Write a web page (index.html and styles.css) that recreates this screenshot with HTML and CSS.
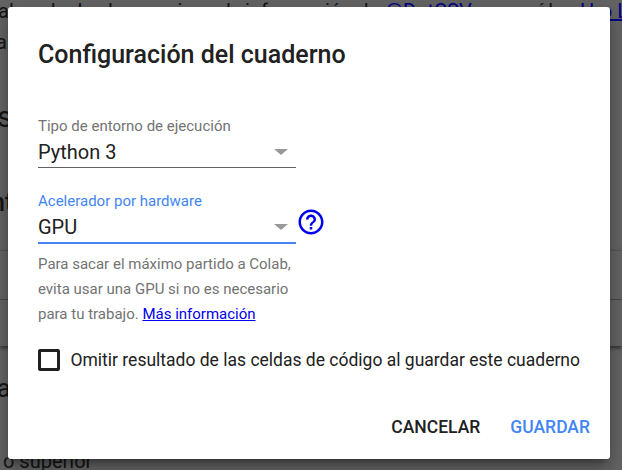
FILE: index.html
```html
<!DOCTYPE html>
<html lang="es">
<head>
<meta charset="utf-8">
<title>Configuración del cuaderno</title>
<link rel="stylesheet" href="styles.css">
</head>
<body>
<div class="page">
  <p class="copy intro"><span class="w1">al</span><span class="w2">cada</span><span class="w3">de</span><span class="w4">al</span><span class="w5">uso</span><span class="w6">mi</span><span class="w7">una</span><span class="w11">la</span><span class="w8">información de</span><a class="w9">@DotCSV,</a><span class="w10">aquí los</span><a>Hro L</a></p>
  <p class="copy second">ar</p>
  <h2 class="heading">s</h2>
  <h3 class="subheading">nt</h3>
  <div class="cell"><div class="cell-line"></div></div>
  <h2 class="heading after">a</h2>
  <p class="copy last">o superior</p>
</div>
<main class="dialog">
  <h1 class="title">Configuración del cuaderno</h1>
  <div class="field">
    <label class="label">Tipo de entorno de ejecución</label>
    <div class="select"><span>Python 3</span><i class="arrow"></i></div>
  </div>
  <div class="row">
    <div class="field focused">
      <label class="label">Acelerador por hardware</label>
      <div class="select"><span>GPU</span><i class="arrow"></i></div>
    </div>
    <svg class="help" viewBox="0 0 24 24"><path d="M11 18h2v-2h-2v2zm1-16C6.48 2 2 6.48 2 12s4.48 10 10 10 10-4.48 10-10S17.520 2 12 2zm0 18c-4.410 0-8-3.590-8-8s3.590-8 8-8 8 3.590 8 8-3.590 8-8 8zm0-14c-2.210 0-4 1.790-4 4h2c0-1.100.9-2 2-2s2 .9 2 2c0 2-3 1.750-3 5h2c0-2.250 3-2.500 3-5 0-2.210-1.790-4-4-4z"/></svg>
  </div>
  <p class="hint">Para sacar el máximo partido a Colab,<br>evita usar una GPU si no es necesario<br>para tu trabajo. <a>Más información</a></p>
  <div class="check"><span class="box"></span><span>Omitir resultado de las celdas de código al guardar este cuaderno</span></div>
  <div class="actions"><button>CANCELAR</button><button class="primary">GUARDAR</button></div>
</main>
</body>
</html>
```
FILE: styles.css
```css
* { box-sizing: border-box; }
body { margin: 0; width: 622px; height: 470px; overflow: hidden; position: relative; background: #646464; font-family: Roboto, sans-serif; color: #212121; }
p, h1, h2, h3 { margin: 0; font-weight: 400; }
.page { height: 470px; overflow: hidden; color: #151515; white-space: nowrap; }
.copy { font-size: 20px; line-height: 32px; }
.intro { display: flex; height: 32px; margin: -5px 0 0 -2px; }
.intro > * { flex: none; }
.intro a { color: #00008b; text-decoration: underline; }
.w1 { width: 25px; } .w2 { width: 48px; } .w3 { width: 26px; } .w4 { width: 24px; }
.w5 { width: 39px; } .w6 { width: 30px; } .w7 { width: 36px; } .w11 { width: 19px; } .w8 { width: 140px; }
.w9 { width: 120px; } .w10 { width: 75px; }
.second { margin: -1px 0 0 -4px; }
.heading { font-size: 30px; line-height: 40px; margin: 39px 0 0 -3px; }
.subheading { font-size: 25px; font-weight: 500; line-height: 40px; margin: 46px 0 0 -9px; }
.cell { height: 96px; margin-top: 27px; border-top: 1px solid #555; box-shadow: 0 2px 4px #0008; }
.cell-line { height: 49px; border-bottom: 1px solid #484848; }
.after { font-size: 25px; margin-top: 23px; }
.last { margin: 36px 0 0 3px; }
.dialog { position: absolute; left: 8px; top: 7px; width: 602px; height: 452px; padding: 30px; background: #fff; border-radius: 3px; box-shadow: 0 12px 16px 1px #00000024, 0 4px 22px 3px #0000001f, 0 6px 8px -4px #0006; }
.title { font-size: 25px; font-weight: 500; line-height: 35px; }
.field { width: 258px; }
.title + .field { margin-top: 42px; }
.label { display: block; height: 24px; font-size: 15px; line-height: 25px; color: #737373; }
.select { display: flex; justify-content: space-between; align-items: center; height: 30px; padding: 0 8px 1px 0; font-size: 20px; border-bottom: 1px solid #616161; }
.arrow { border: 7px solid transparent; border-top: 6px solid #999; border-bottom: 0; }
.row { display: flex; margin-top: 21px; }
.focused .label { color: #4285f4; }
.focused .select { height: 31px; border-bottom: 2px solid #4285f4; }
.help { width: 30px; height: 30px; margin-top: 18px; fill: #00e; }
.hint { margin-top: 8px; font-size: 15px; line-height: 25px; color: #737373; }
.hint a { color: #00e; text-decoration: underline; }
.check { display: flex; align-items: center; gap: 10px; height: 24px; margin-top: 21px; font-size: 17.5px; white-space: nowrap; }
.box { width: 23px; height: 22px; border: 3px solid #212121; border-radius: 2px; }
.actions { display: flex; justify-content: flex-end; gap: 30px; margin: 43px -10px 0 0; }
button { padding: 0; border: 0; background: none; color: #212121; font: 500 17.500px/24px Roboto, sans-serif; }
.primary { color: #4285f4; }
```
